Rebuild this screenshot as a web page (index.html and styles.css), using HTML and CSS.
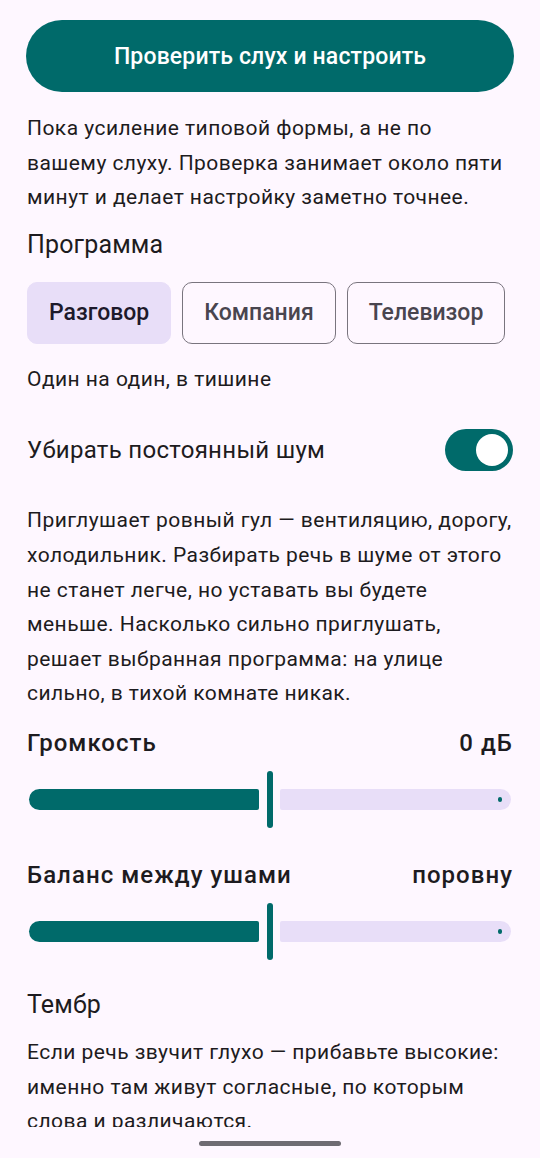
FILE: index.html
```html
<!DOCTYPE html>
<html lang="ru">
<head>
<meta charset="utf-8">
<title>Настройка слуха</title>
<link rel="stylesheet" href="styles.css">
</head>
<body>
<div class="screen">
  <div class="scroll">
    <div class="content">
      <button class="primary">Проверить слух и настроить</button>
      <p class="body p1">Пока усиление типовой формы, а не по вашему слуху. Проверка занимает около пяти минут и делает настройку заметно точнее.</p>
      <h2 class="section">Программа</h2>
      <div class="chips">
        <div class="chip selected">Разговор</div>
        <div class="chip">Компания</div>
        <div class="chip">Телевизор</div>
      </div>
      <p class="body hint">Один на один, в тишине</p>
      <div class="switch-row">
        <span class="switch-label">Убирать постоянный шум</span>
        <span class="switch"><span class="thumb"></span></span>
      </div>
      <p class="body p2">Приглушает ровный гул — вентиляцию, дорогу, холодильник. Разбирать речь в шуме от этого не станет легче, но уставать вы будете меньше. Насколько сильно приглушать, решает выбранная программа: на улице сильно, в тихой комнате никак.</p>
      <div class="label-row first">
        <span>Громкость</span>
        <span>0 дБ</span>
      </div>
      <div class="slider">
        <div class="active" style="width:230px"></div>
        <div class="handle"></div>
        <div class="inactive"><span class="dot"></span></div>
      </div>
      <div class="label-row">
        <span>Баланс между ушами</span>
        <span>поровну</span>
      </div>
      <div class="slider">
        <div class="active" style="width:230px"></div>
        <div class="handle"></div>
        <div class="inactive"><span class="dot"></span></div>
      </div>
      <h2 class="section timbre">Тембр</h2>
      <p class="body p3">Если речь звучит глухо — прибавьте высокие: именно там живут согласные, по которым слова и различаются.</p>
    </div>
  </div>
  <div class="navbar"><span class="pill"></span></div>
</div>
</body>
</html>
```

FILE: styles.css
```css
* { box-sizing: border-box; }
html, body {
  margin: 0;
  padding: 0;
  background: #FEF7FF;
}
body {
  font-family: Roboto, "Noto Sans", sans-serif;
  color: #1D1B20;
}
.screen {
  width: 540px;
  height: 1158px;
  display: flex;
  flex-direction: column;
  overflow: hidden;
}
.scroll {
  height: 1127px;
  overflow: hidden;
  flex: none;
}
.content {
  padding: 20px 27px 0 27px;
  display: flex;
  flex-direction: column;
}
.primary {
  height: 72px;
  width: 488px;
  margin-left: -1px;
  border: none;
  border-radius: 36px;
  background: #006A6A;
  color: #FFFFFF;
  font-family: Roboto, sans-serif;
  font-size: 23px;
  font-weight: 500;
  letter-spacing: 0.15px;
}
.body {
  margin: 0;
  font-size: 21px;
  line-height: 34.6px;
  letter-spacing: 0.45px;
  color: #1D1B20;
}
.p1 { margin-top: 19px; }
.section {
  margin: 0;
  font-size: 25px;
  font-weight: 400;
  line-height: 32px;
  letter-spacing: 0.15px;
  color: #1D1B20;
}
.p1 + .section { margin-top: 14px; }
.chips {
  display: flex;
  gap: 11px;
  margin-top: 21px;
}
.chip {
  height: 62px;
  padding: 0 21px;
  border-radius: 10px;
  border: 1.3px solid #79747E;
  display: flex;
  align-items: center;
  font-size: 23px;
  font-weight: 500;
  color: #49454F;
  letter-spacing: 0;
}
.chip.selected {
  background: #E8DEF8;
  border-color: #E8DEF8;
  color: #1D192B;
}
.hint { margin-top: 18px; }
.switch-row {
  display: flex;
  justify-content: space-between;
  align-items: center;
  margin-top: 33px;
}
.switch-label {
  font-size: 24px;
  line-height: 32px;
  letter-spacing: 0.3px;
}
.switch {
  width: 68px;
  height: 42px;
  border-radius: 21px;
  background: #006A6A;
  display: flex;
  align-items: center;
  justify-content: flex-end;
  padding-right: 5px;
}
.thumb {
  width: 32px;
  height: 32px;
  border-radius: 50%;
  background: #FFFFFF;
}
.p2 { margin-top: 32px; }
.label-row {
  display: flex;
  justify-content: space-between;
  font-size: 24px;
  font-weight: 500;
  line-height: 32px;
  letter-spacing: 1.05px;
  margin-top: 31px;
}
.label-row.first { margin-top: 16px; }
.slider {
  display: flex;
  align-items: center;
  height: 57px;
  margin: 12px 2px 0 2px;
}
.active {
  height: 21px;
  background: #006A6A;
  border-radius: 10.5px 2px 2px 10.5px;
  flex: none;
}
.handle {
  width: 6px;
  height: 57px;
  border-radius: 3px;
  background: #006A6A;
  margin: 0 7px 0 8px;
  flex: none;
}
.inactive {
  flex: 1;
  height: 21px;
  background: #E8DEF8;
  border-radius: 2px 10.5px 10.5px 2px;
  display: flex;
  align-items: center;
  justify-content: flex-end;
  padding-right: 9px;
}
.dot {
  width: 4.5px;
  height: 4.5px;
  border-radius: 50%;
  background: #006A6A;
}
.timbre { margin-top: 29px; }
.p3 { margin-top: 14px; }
.navbar {
  flex: 1;
  display: flex;
  justify-content: center;
  padding-top: 14px;
}
.pill {
  width: 142px;
  height: 5px;
  border-radius: 3px;
  background: #6F6C73;
}
```
